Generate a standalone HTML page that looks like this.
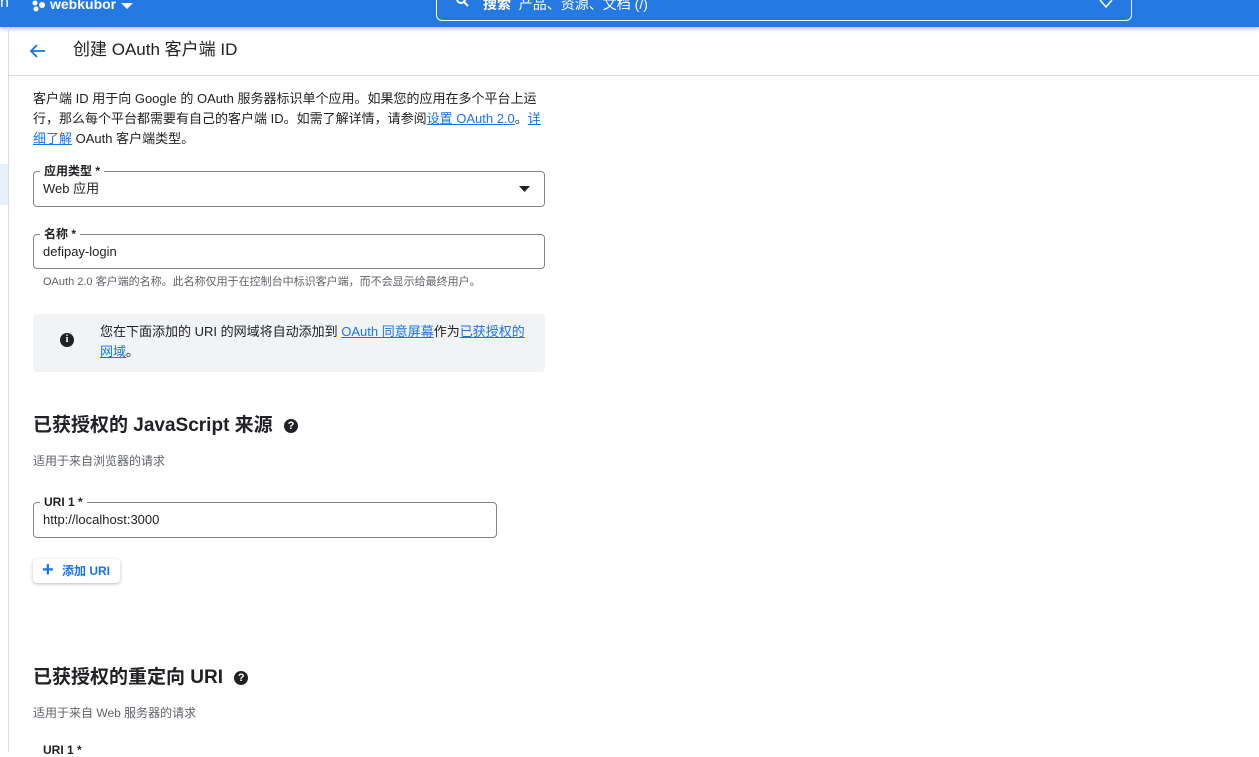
<!DOCTYPE html>
<html><head><meta charset="utf-8"><style>
body{margin:0;width:1259px;height:752px;overflow:hidden;background:#fff;font-family:"Liberation Sans","Noto Sans CJK SC",sans-serif;color:#202124;position:relative}
.a{position:absolute}
.hdr{left:0;top:0;width:1259px;height:27px;background:#2579e3;box-shadow:0 2px 4px rgba(0,0,0,.25)}
.lnk{color:#1a73e8;text-decoration:underline}
.fld{position:absolute;border:1px solid #80868b;border-radius:4px;height:34px;box-sizing:border-box}
.lab{position:absolute;top:-9px;left:6px;background:#fff;padding:0 4px;font-size:12px;font-weight:bold;color:#202124;line-height:16px}
.val{position:absolute;left:9px;top:9px;font-size:13px;line-height:16px}
h2{margin:0;font-size:19px;font-weight:bold;position:absolute}
.q{display:inline-block;width:14px;height:14px;border-radius:50%;background:#202124;color:#fff;font-size:11px;line-height:14px;text-align:center;font-weight:bold;vertical-align:middle}
.sub{font-size:12px;color:#5f6368;position:absolute}
</style></head><body>
<div class="a hdr"></div>
<div class="a" style="left:0;top:-6px;color:#fff;font-size:16px">n</div>
<svg class="a" style="left:31px;top:0" width="16" height="12"><circle cx="4" cy="3" r="2.5" fill="#fff"/><circle cx="11" cy="5" r="3" fill="#fff"/><circle cx="5" cy="9" r="2.5" fill="#fff"/></svg>
<div class="a" style="left:50px;top:-4px;color:#fff;font-size:14px;font-weight:bold">webkubor</div>
<svg class="a" style="left:120px;top:2px" width="14" height="8"><path d="M1 1h12L7 7z" fill="#fff"/></svg>
<div class="a" style="left:436px;top:-10px;width:694px;height:29px;border:1px solid #fff;border-radius:6px"></div>
<svg class="a" style="left:456px;top:-3px" width="14" height="10"><circle cx="5" cy="2" r="4" stroke="#fff" stroke-width="2" fill="none"/><path d="M8 5l4 4" stroke="#fff" stroke-width="2"/></svg>
<div class="a" style="left:483px;top:-6px;color:#fff;font-size:14px"><b>搜索</b>&nbsp; 产品、资源、文档 (/)</div>
<svg class="a" style="left:1098px;top:0" width="16" height="9"><path d="M2 0l6 7 6-7" stroke="#fff" stroke-width="1.5" fill="none"/></svg>
<div class="a" style="left:8px;top:27px;width:1px;height:725px;background:#dadce0"></div>
<div class="a" style="left:0;top:164px;width:8px;height:41px;background:#e8f0fe"></div>
<div class="a" style="left:9px;top:75px;width:1250px;height:1px;background:#dadce0"></div>
<svg class="a" style="left:28px;top:43px" width="18" height="16"><path d="M17 8H3M9 2L3 8l6 6" stroke="#1a73e8" stroke-width="1.8" fill="none"/></svg>
<div class="a" style="left:73px;top:40px;font-size:17px;line-height:20px">创建 OAuth 客户端 ID</div>
<div class="a" style="left:33px;top:89px;width:515px;font-size:13px;line-height:20px">客户端 ID 用于向 Google 的 OAuth 服务器标识单个应用。如果您的应用在多个平台上运行，那么每个平台都需要有自己的客户端 ID。如需了解详情，请参阅<span class="lnk">设置 OAuth 2.0</span>。<span class="lnk">详细了解</span> OAuth 客户端类型。</div>
<div class="fld" style="left:33px;top:171px;width:512px;height:36px"><div class="lab">应用类型 *</div><div class="val">Web 应用</div>
<svg class="a" style="left:485px;top:14px" width="12" height="7"><path d="M0 0h11L5.5 6z" fill="#202124"/></svg></div>
<div class="fld" style="left:33px;top:234px;width:512px;height:35px"><div class="lab">名称 *</div><div class="val">defipay-login</div></div>
<div class="a" style="left:43px;top:273px;font-size:11px;color:#5f6368">OAuth 2.0 客户端的名称。此名称仅用于在控制台中标识客户端，而不会显示给最终用户。</div>
<div class="a" style="left:33px;top:314px;width:512px;height:58px;background:#f1f3f4;border-radius:4px"></div>
<div class="a" style="left:60px;top:333px;width:14px;height:14px;border-radius:50%;background:#202124;color:#fff;font-size:10px;font-weight:bold;text-align:center;line-height:14px;font-family:'Liberation Serif',serif">i</div>
<div class="a" style="left:100px;top:322px;width:430px;font-size:13px;line-height:20px">您在下面添加的 URI 的网域将自动添加到 <span class="lnk">OAuth 同意屏幕</span>作为<span class="lnk">已获授权的网域</span>。</div>
<h2 style="left:33px;top:413px;line-height:26px">已获授权的 JavaScript 来源 <span class="q" style="margin-left:6px">?</span></h2>
<div class="sub" style="left:33px;top:452px">适用于来自浏览器的请求</div>
<div class="fld" style="left:33px;top:502px;width:464px;height:36px"><div class="lab">URI 1 *</div><div class="val">http://localhost:3000</div></div>
<div class="a" style="left:33px;top:559px;width:87px;height:24px;border-radius:4px;box-shadow:0 1px 3px rgba(60,64,67,.35);color:#1a73e8;font-size:12px;font-weight:bold;line-height:24px"><span style="font-size:20px;position:absolute;left:9px;top:-1px">+</span><span style="position:absolute;left:29px">添加 URI</span></div>
<h2 style="left:33px;top:665px;line-height:26px">已获授权的重定向 URI <span class="q" style="margin-left:6px">?</span></h2>
<div class="sub" style="left:33px;top:704px">适用于来自 Web 服务器的请求</div>
<div class="a" style="left:43px;top:743px;font-size:12px;font-weight:bold">URI 1 *</div>
</body></html>
